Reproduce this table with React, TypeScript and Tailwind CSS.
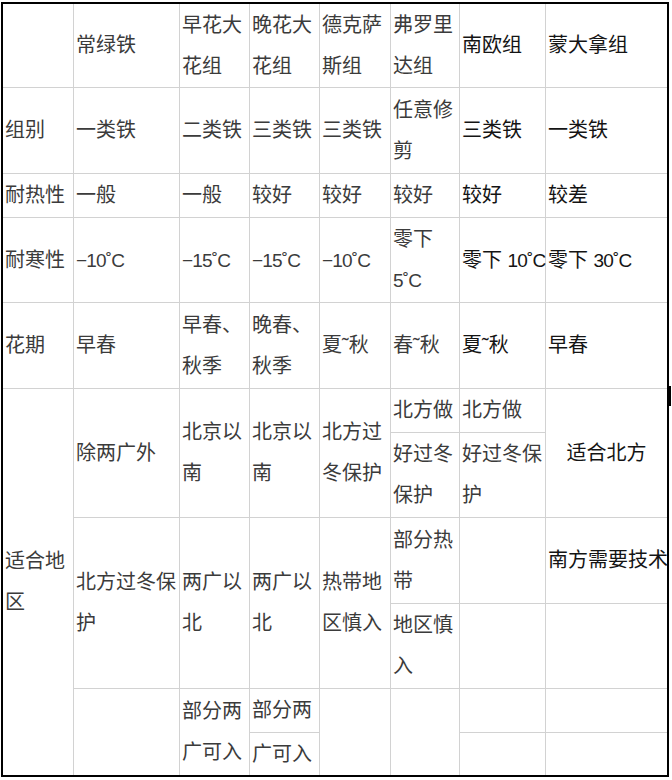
import type { ReactNode } from "react";

// one table cell: white box over the grey grid background, lines stacked
function Cell({
  at,
  lines = [],
  dark = false,
  center = false,
}: {
  at: string;
  lines?: ReactNode[];
  dark?: boolean;
  center?: boolean;
}) {
  return (
    <div
      className={`${at} flex flex-col justify-center bg-white whitespace-nowrap leading-[41px] ${
        center ? "items-center" : "pl-[2px]"
      } ${dark ? "text-[#141414]" : "text-[#3b3b3b]"}`}
    >
      {lines.map((l, i) => (
        <span key={i}>{l}</span>
      ))}
    </div>
  );
}

// temperatures are set a bit narrower than the CJK text around them
function Deg({ children }: { children: ReactNode }) {
  return <span className="text-[19px] tracking-[-0.8px]">{children}</span>;
}

export default function App() {
  return (
    <div className="relative h-[780px] w-[672px] bg-white pl-px pt-[2px] font-['Liberation_Sans','Noto_Sans_CJK_SC',sans-serif] text-[20px]">
      <div className="grid w-[668px] grid-cols-[70px_105px_69px_69px_70px_68px_85px_121px] grid-rows-[83px_85px_43px_84px_85px_43px_84px_85px_84px_43px_42px] gap-px border-2 border-black bg-[#d2d2d2]">
        {/* header */}
        <Cell at="col-start-1 row-start-1" />
        <Cell at="col-start-2 row-start-1" lines={["常绿铁"]} />
        <Cell at="col-start-3 row-start-1" lines={["早花大", "花组"]} />
        <Cell at="col-start-4 row-start-1" lines={["晚花大", "花组"]} />
        <Cell at="col-start-5 row-start-1" lines={["德克萨", "斯组"]} />
        <Cell at="col-start-6 row-start-1" lines={["弗罗里", "达组"]} />
        <Cell at="col-start-7 row-start-1" lines={["南欧组"]} dark />
        <Cell at="col-start-8 row-start-1" lines={["蒙大拿组"]} dark />

        {/* 组别 */}
        <Cell at="col-start-1 row-start-2" lines={["组别"]} />
        <Cell at="col-start-2 row-start-2" lines={["一类铁"]} />
        <Cell at="col-start-3 row-start-2" lines={["二类铁"]} />
        <Cell at="col-start-4 row-start-2" lines={["三类铁"]} />
        <Cell at="col-start-5 row-start-2" lines={["三类铁"]} />
        <Cell at="col-start-6 row-start-2" lines={["任意修", "剪"]} />
        <Cell at="col-start-7 row-start-2" lines={["三类铁"]} dark />
        <Cell at="col-start-8 row-start-2" lines={["一类铁"]} dark />

        {/* 耐热性 */}
        <Cell at="col-start-1 row-start-3" lines={["耐热性"]} />
        <Cell at="col-start-2 row-start-3" lines={["一般"]} />
        <Cell at="col-start-3 row-start-3" lines={["一般"]} />
        <Cell at="col-start-4 row-start-3" lines={["较好"]} />
        <Cell at="col-start-5 row-start-3" lines={["较好"]} />
        <Cell at="col-start-6 row-start-3" lines={["较好"]} />
        <Cell at="col-start-7 row-start-3" lines={["较好"]} dark />
        <Cell at="col-start-8 row-start-3" lines={["较差"]} dark />

        {/* 耐寒性 */}
        <Cell at="col-start-1 row-start-4" lines={["耐寒性"]} />
        <Cell at="col-start-2 row-start-4" lines={[<Deg>−10˚C</Deg>]} />
        <Cell at="col-start-3 row-start-4" lines={[<Deg>−15˚C</Deg>]} />
        <Cell at="col-start-4 row-start-4" lines={[<Deg>−15˚C</Deg>]} />
        <Cell at="col-start-5 row-start-4" lines={[<Deg>−10˚C</Deg>]} />
        <Cell at="col-start-6 row-start-4" lines={["零下", <Deg>5˚C</Deg>]} />
        <Cell at="col-start-7 row-start-4" lines={[<>零下 <Deg>10˚C</Deg></>]} dark />
        <Cell at="col-start-8 row-start-4" lines={[<>零下 <Deg>30˚C</Deg></>]} dark />

        {/* 花期 */}
        <Cell at="col-start-1 row-start-5" lines={["花期"]} />
        <Cell at="col-start-2 row-start-5" lines={["早春"]} />
        <Cell at="col-start-3 row-start-5" lines={["早春、", "秋季"]} />
        <Cell at="col-start-4 row-start-5" lines={["晚春、", "秋季"]} />
        <Cell at="col-start-5 row-start-5" lines={["夏˜秋"]} />
        <Cell at="col-start-6 row-start-5" lines={["春˜秋"]} />
        <Cell at="col-start-7 row-start-5" lines={["夏˜秋"]} dark />
        <Cell at="col-start-8 row-start-5" lines={["早春"]} dark />

        {/* 适合地区 */}
        <Cell at="col-start-1 row-start-6 row-span-6" lines={["适合地", "区"]} />

        <Cell at="col-start-2 row-start-6 row-span-2" lines={["除两广外"]} />
        <Cell at="col-start-2 row-start-8 row-span-2" lines={["北方过冬保", "护"]} />
        <Cell at="col-start-2 row-start-10 row-span-2" />

        <Cell at="col-start-3 row-start-6 row-span-2" lines={["北京以", "南"]} />
        <Cell at="col-start-3 row-start-8 row-span-2" lines={["两广以", "北"]} />
        <Cell at="col-start-3 row-start-10 row-span-2" lines={["部分两", "广可入"]} />

        <Cell at="col-start-4 row-start-6 row-span-2" lines={["北京以", "南"]} />
        <Cell at="col-start-4 row-start-8 row-span-2" lines={["两广以", "北"]} />
        <Cell at="col-start-4 row-start-10" lines={["部分两"]} />
        <Cell at="col-start-4 row-start-11" lines={["广可入"]} />

        <Cell at="col-start-5 row-start-6 row-span-2" lines={["北方过", "冬保护"]} />
        <Cell at="col-start-5 row-start-8 row-span-2" lines={["热带地", "区慎入"]} />
        <Cell at="col-start-5 row-start-10 row-span-2" />

        <Cell at="col-start-6 row-start-6" lines={["北方做"]} />
        <Cell at="col-start-6 row-start-7" lines={["好过冬", "保护"]} />
        <Cell at="col-start-6 row-start-8" lines={["部分热", "带"]} />
        <Cell at="col-start-6 row-start-9" lines={["地区慎", "入"]} />
        <Cell at="col-start-6 row-start-10 row-span-2" />

        <Cell at="col-start-7 row-start-6" lines={["北方做"]} />
        <Cell at="col-start-7 row-start-7" lines={["好过冬保", "护"]} />
        <Cell at="col-start-7 row-start-8" />
        <Cell at="col-start-7 row-start-9" />
        <Cell at="col-start-7 row-start-10" />
        <Cell at="col-start-7 row-start-11" />

        <Cell at="col-start-8 row-start-6 row-span-2" lines={["适合北方"]} dark center />
        <Cell at="col-start-8 row-start-8" lines={["南方需要技术"]} dark />
        <Cell at="col-start-8 row-start-9" />
        <Cell at="col-start-8 row-start-10" />
        <Cell at="col-start-8 row-start-11" />
      </div>
      {/* stray mark at the right edge */}
      <div className="absolute left-[668px] top-[386px] h-[20px] w-[3px] bg-black" />
    </div>
  );
}
